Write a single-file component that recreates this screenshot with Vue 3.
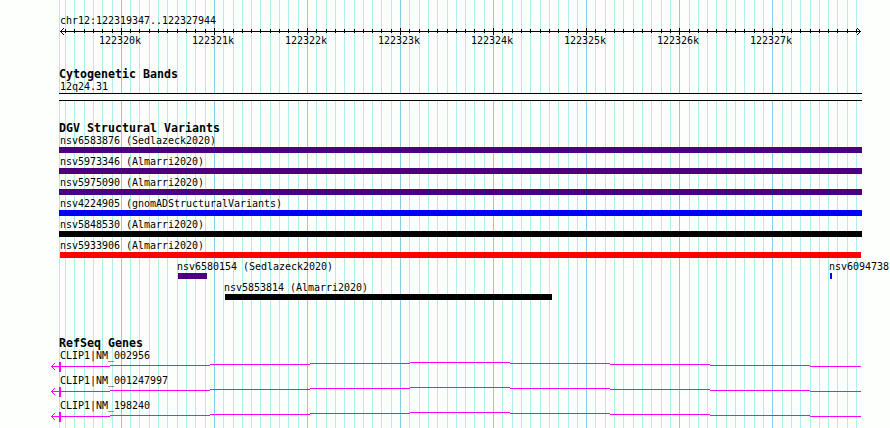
<template>
  <div class="browser">
    <svg class="grid" width="890" height="428" shape-rendering="crispEdges">
      <rect class="minor" x="59" y="0" width="1" height="428" />
      <rect
        v-for="tick in ticks"
        :key="tick.x"
        :class="tick.major ? 'major' : 'minor'"
        :x="tick.x"
        y="0"
        width="1"
        height="428"
      />
    </svg>

    <section class="ruler">
      <div class="label">chr12:122319347..122327944</div>
      <svg class="axis" width="890" height="9" shape-rendering="crispEdges">
        <rect x="60" y="4" width="801" height="1" />
        <rect
          v-for="tick in ticks"
          :key="tick.x"
          :x="tick.x"
          :y="tick.major ? 1 : 2"
          width="1"
          :height="tick.major ? 7 : 4"
        />
        <path d="M61 3h1v3h-1zM62 2h1v1h-1zM63 1h1v1h-1zM62 6h1v1h-1zM63 7h1v1h-1z" />
        <path d="M859 3h1v3h-1zM858 2h1v1h-1zM857 1h1v1h-1zM858 6h1v1h-1zM857 7h1v1h-1z" />
      </svg>
      <div class="scale">
        <span v-for="n in 8" :key="n">{{ 122319 + n }}k</span>
      </div>
    </section>

    <section class="cytobands">
      <h2>Cytogenetic Bands</h2>
      <div class="label">12q24.31</div>
      <div class="band"></div>
    </section>

    <section class="variants">
      <h2>DGV Structural Variants</h2>
      <div v-for="(row, i) in variantRows" :key="i" class="row">
        <div
          v-for="variant in row"
          :key="variant.name"
          class="variant"
          :style="{ marginLeft: variant.gap + 'px', width: variant.width + 'px' }"
        >
          <div class="label" :style="{ textIndent: variant.indent + 'px' }">
            {{ variant.name }}
          </div>
          <div class="bar" :style="{ background: variant.color }"></div>
        </div>
      </div>
    </section>

    <section class="genes">
      <h2>RefSeq Genes</h2>
      <div v-for="gene in genes" :key="gene" class="gene">
        <div class="label">{{ gene }}</div>
        <svg width="890" height="12" shape-rendering="crispEdges">
          <rect
            v-for="part in intron"
            :key="part.x"
            :x="part.x"
            :y="part.y"
            :width="part.width"
            height="1"
          />
          <rect x="59" y="2" width="2" height="10" />
          <path d="M52 5h1v3h-1zM53 4h1v1h-1zM54 3h1v1h-1zM53 8h1v1h-1zM54 9h1v1h-1z" />
        </svg>
      </div>
    </section>
  </div>
</template>

<script setup>
// One tick every 100 bp, a major one every 1000 bp
const ticks = Array.from({ length: 86 }, (_, i) => {
  const step = i - 6;
  return {
    x: Math.floor(121.37 + step * 9.306),
    major: step % 10 === 0,
  };
});

const indigo = "#4b0082";

const full = (name, color) => [
  { name, color, gap: 59, width: 803, indent: 1 },
];

// gap is the space to the left of the bar, indent shifts the name over it
const variantRows = [
  full("nsv6583876 (Sedlazeck2020)", indigo),
  full("nsv5973346 (Almarri2020)", indigo),
  full("nsv5975090 (Almarri2020)", indigo),
  full("nsv4224905 (gnomADStructuralVariants)", "#0000ff"),
  full("nsv5848530 (Almarri2020)", "#000000"),
  [
    {
      name: "nsv5933906 (Almarri2020)",
      color: "#ff0000",
      gap: 60,
      width: 801,
      indent: 0,
    },
  ],
  [
    {
      name: "nsv6580154 (Sedlazeck2020)",
      color: indigo,
      gap: 178,
      width: 29,
      indent: -1,
    },
    { name: "nsv6094738", color: "#0000ff", gap: 623, width: 2, indent: -1 },
  ],
  [
    {
      name: "nsv5853814 (Almarri2020)",
      color: "#000000",
      gap: 225,
      width: 327,
      indent: -1,
    },
  ],
];

const genes = ["CLIP1|NM_002956", "CLIP1|NM_001247997", "CLIP1|NM_198240"];

// The intron line rises to the middle in steps of one pixel
const intron = [
  { x: 51, y: 6, width: 59 },
  { x: 110, y: 5, width: 100 },
  { x: 210, y: 4, width: 100 },
  { x: 310, y: 3, width: 100 },
  { x: 410, y: 2, width: 100 },
  { x: 510, y: 3, width: 100 },
  { x: 610, y: 4, width: 100 },
  { x: 710, y: 5, width: 100 },
  { x: 810, y: 6, width: 51 },
];
</script>

<style>
body {
  margin: 0;
  background: #fdfffc;
}
</style>

<style scoped>
.browser {
  position: relative;
  width: 890px;
  height: 428px;
  overflow: hidden;
  color: #000;
  font-family: "DejaVu Sans Mono", monospace;
  font-size: 10px;
  letter-spacing: -0.02px;
}

.grid {
  position: absolute;
  top: 0;
  left: 0;
}

.minor {
  fill: #afeeee;
}

.major {
  fill: #87ceeb;
}

svg {
  display: block;
}

section {
  position: relative;
}

.label {
  height: 12px;
  line-height: 12px;
  white-space: pre;
}

h2 {
  margin: 0 0 0 59px;
  height: 13px;
  line-height: 13px;
  font-size: 11.6px;
  font-weight: bold;
  letter-spacing: 0.016px;
  white-space: pre;
}

.ruler {
  padding-top: 15px;
  height: 53px;
}

.ruler .label,
.cytobands .label,
.genes .label {
  margin-left: 60px;
}

.scale {
  display: flex;
  gap: 51px;
  margin-left: 99px;
  line-height: 12px;
  margin-top: -1px;
}

.scale span {
  width: 42px;
}

.cytobands {
  height: 54px;
}

.band {
  width: 803px;
  height: 6px;
  margin-left: 59px;
  border-top: 1px solid #000;
  border-bottom: 1px solid #000;
  background: #fdfffc;
}

.variants {
  height: 215px;
}

.row {
  display: flex;
  height: 21px;
}

.variant {
  flex: none;
}

.bar {
  height: 6px;
}

.gene {
  height: 25px;
}

.genes .label {
  height: 10px;
  line-height: 12px;
}

.genes svg {
  fill: #ff00ff;
}
</style>
